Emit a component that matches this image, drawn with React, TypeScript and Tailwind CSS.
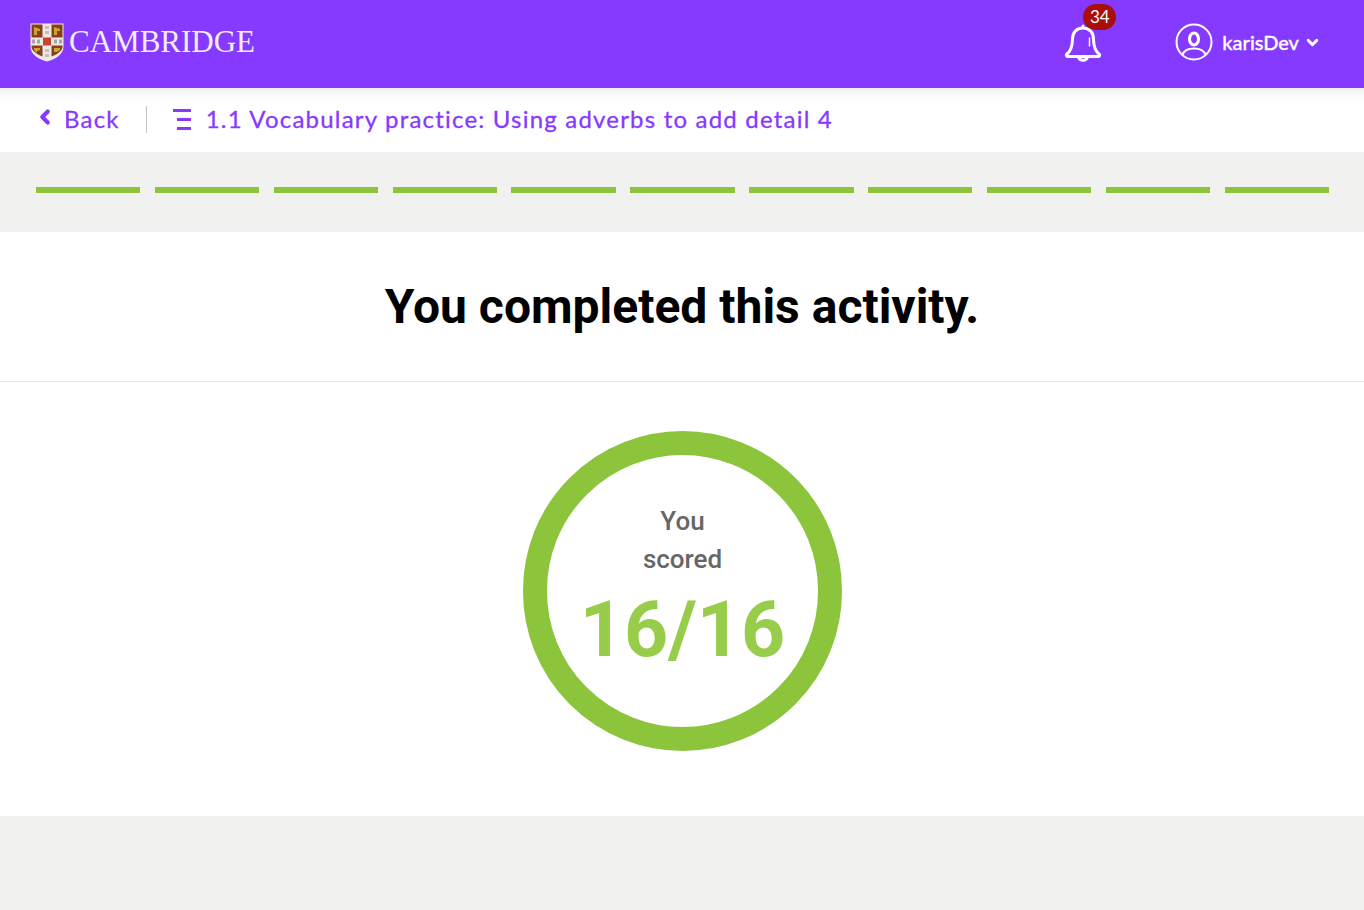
import { ChevronDown, ChevronLeft } from "lucide-react";

const segments = Array.from({ length: 11 }, (_, i) => i);

function Shield() {
  return (
    <svg width="34" height="39" viewBox="0 0 34 39" className="shrink-0">
      <path d="M0.5 0.5H33.5V24C33.5 31 26 36 17 38.5C8 36 0.5 31 0.5 24Z" fill="#efe9e6" />
      <path d="M1.500 1.500H12.500V14.500H1.500Z" fill="#8a3f1c" />
      <path d="M21.500 1.500H32.500V14.500H21.500Z" fill="#8a3f1c" />
      <path d="M1.500 22.500H12.500V33.500C7 31.500 2 28 1.500 24Z" fill="#8a3f1c" />
      <path d="M21.500 22.500H32.500V24C32 28 27 31.500 21.500 33.500Z" fill="#8a3f1c" />
      <path d="M4 4L10 6V8L7 8V12L4 12Z M24 4L30 6V8L27 8V12L24 12Z M4 25L10 25V27L7 28V30L4 27Z M24 25L30 25V27L27 29L24 29Z" fill="#c9a531" />
      <path d="M13 14.500H21V22.500H13Z" fill="#c8432c" />
      <path d="M15 3H19V6H15Z M15 8H19V11H15Z M15 26H19V29H15Z M15 31H19V34H15Z" fill="#c4bfb9" />
      <path d="M2 16.500H5V20.500H2Z M7 16.500H10V20.500H7Z M24 16.500H27V20.500H24Z M29 16.500H32V20.500H29Z" fill="#a9a49f" />
    </svg>
  );
}

function Bell() {
  return (
    <svg width="40" height="40" viewBox="0 0 40 40" fill="none" stroke="white" strokeWidth="3" strokeLinejoin="round" strokeLinecap="round">
      <path d="M20 5V3M20 5C13 5 9.500 10 9.500 16C9.500 24 8 28 3.500 31.500C3 32.500 3.500 33.500 4.500 33.500H35.500C36.500 33.500 37 32.500 36.500 31.500C32 28 30.500 24 30.500 16C30.500 10 27 5 20 5Z" />
      <path d="M15.500 33.500C15.500 38.500 24.500 38.500 24.500 33.500" />
      <path d="M26.500 15V23" strokeWidth="1.500" />
    </svg>
  );
}

function UserCircle() {
  return (
    <svg width="38" height="38" viewBox="0 0 38 38" fill="none" stroke="white">
      <circle cx="19" cy="19" r="17.500" strokeWidth="2" />
      <ellipse cx="19" cy="16" rx="4.500" ry="6" strokeWidth="3" />
      <path d="M7.500 32C9 27 14 25.500 19 25.500C24 25.500 29 27 30.500 32" strokeWidth="2" />
    </svg>
  );
}

function ListIcon() {
  return (
    <svg width="20" height="21" viewBox="0 0 20 21" fill="#8639ff" className="shrink-0">
      <rect x="1" y="0" width="18" height="3" />
      <rect x="5" y="9" width="14" height="3" />
      <rect x="5" y="18" width="14" height="3" />
    </svg>
  );
}

export default function App() {
  return (
    <div className="flex min-h-[910px] flex-col bg-[#f1f1ef] font-['Roboto',sans-serif]">
      <header className="flex h-[88px] items-center justify-between bg-[#8639ff] pb-[4px] pl-[30px] pr-[43px]">
        <div className="flex items-center gap-[5px]">
          <Shield />
          <span className="mb-[2px] font-['Liberation_Serif',serif] text-[31px] leading-none text-[#f3ecff]">CAMBRIDGE</span>
        </div>
        <div className="flex items-center">
          <div className="relative mr-[72px] mt-[2px] h-[40px] w-[40px]">
            <Bell />
            <span className="absolute left-[20px] top-[-19px] flex h-[26px] w-[33px] items-center justify-center rounded-full bg-[#a80f0a] font-['Lato',sans-serif] text-[17px] text-white">
              34
            </span>
          </div>
          <UserCircle />
          <span className="ml-[9px] font-['Lato',sans-serif] text-[20px] font-medium text-white [-webkit-text-stroke:0.3px]">karisDev</span>
          <ChevronDown size={17} strokeWidth={4} color="white" className="ml-[5px]" />
        </div>
      </header>

      <nav className="relative flex h-[64px] items-center bg-white pb-[2px] pl-[34px] text-[#8639ff] shadow-[inset_0_14px_14px_-12px_rgba(0,0,0,0.1)]">
        <ChevronLeft size={22} strokeWidth={4.500} className="mb-[4px]" />
        <span className="ml-[8px] font-['Lato',sans-serif] text-[24px] tracking-[1.2px] [-webkit-text-stroke:0.3px]">Back</span>
        <div className="ml-[26px] mr-[25px] h-[27px] w-px bg-[#c4c4c4]" />
        <ListIcon />
        <span className="ml-[14px] font-['Lato',sans-serif] text-[24px] tracking-[1.2px] [-webkit-text-stroke:0.3px]">
          1.1 Vocabulary practice: Using adverbs to add detail 4
        </span>
      </nav>

      <div className="flex h-[80px] gap-[14.500px] pl-[36px] pr-[35px] pt-[35px]">
        {segments.map((i) => (
          <div key={i} className="h-[6px] flex-1 bg-[#8cc43c]" />
        ))}
      </div>

      <section className="bg-white">
        <div className="flex h-[150px] items-center justify-center border-b border-[#e3e3e3]">
          <h1 className="text-[48px] font-bold text-black">You completed this activity.</h1>
        </div>
        <div className="flex h-[434px] justify-center pl-[1px] pt-[49px]">
          <div className="flex h-[320px] w-[319px] flex-col items-center rounded-full border-[24px] border-[#8cc43c] pt-[47px]">
            <p className="w-[100px] text-center text-[26px] font-medium leading-[38px] text-[#666666]">You scored</p>
            <p className="mt-[10px] text-[77px] font-bold leading-[84px] text-[#97cd4b]">16/16</p>
          </div>
        </div>
      </section>
    </div>
  );
}
